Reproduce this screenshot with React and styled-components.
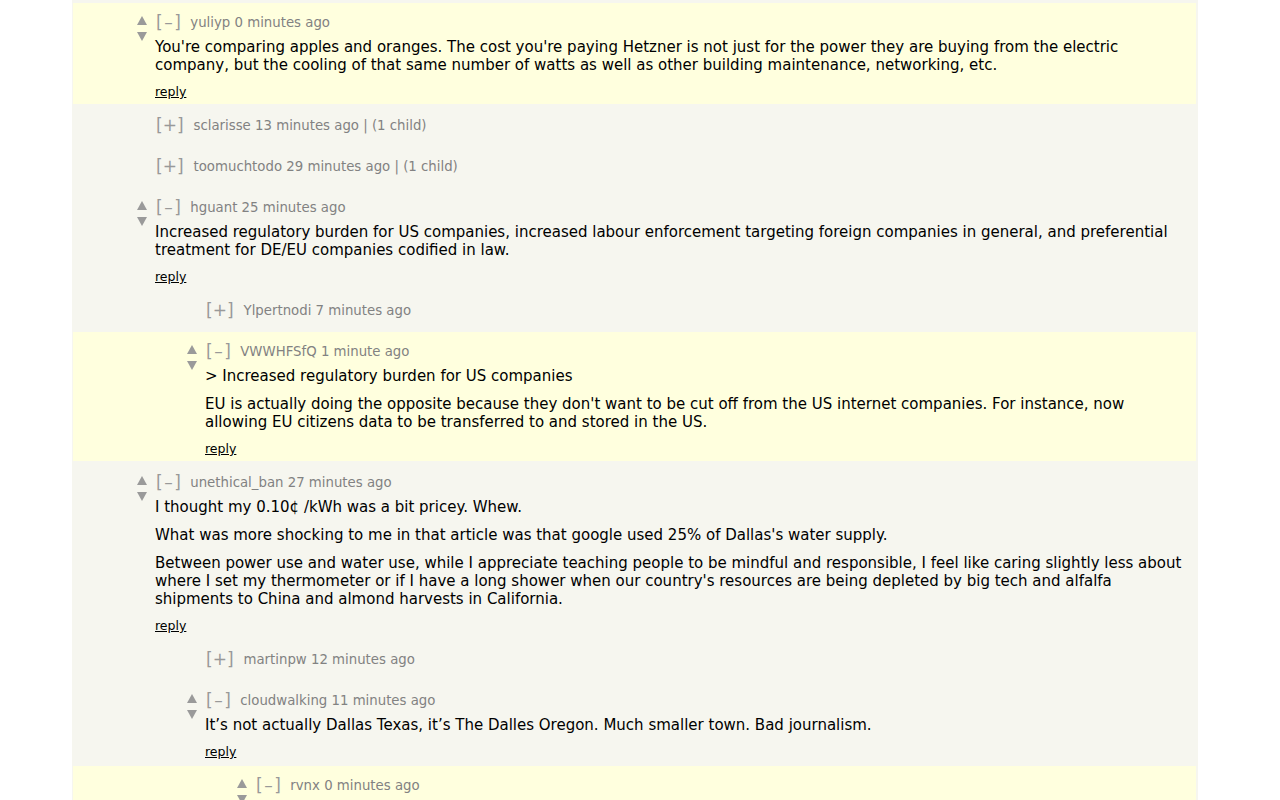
import React from 'react';
import styled, { createGlobalStyle } from 'styled-components';

const GlobalStyle = createGlobalStyle`
  body {
    margin: 0;
    background: #fff;
    font-family: "DejaVu Sans", Verdana, sans-serif;
  }
`;

const Page = styled.div`
  padding-left: 72px;
`;

const Thread = styled.div`
  width: 1126px;
  min-height: 800px;
  background: #f6f6ef;
  padding-top: 3px;
  display: flex;
  flex-direction: column;
  gap: 2px;
`;

const Row = styled.div`
  display: flex;
  margin: 0 2px 0 1px;
  padding: 11px 0 ${props => (props.collapsed ? '12px' : '5px')} ${props => 60 + props.level * 50}px;
  background: ${props => (props.highlight ? '#ffffde' : 'transparent')};
`;

const Votes = styled.div`
  width: 22px;
  flex-shrink: 0;
  display: flex;
  flex-direction: column;
  align-items: flex-start;
  padding: 2px 0 0 4px;
  gap: 7px;
  box-sizing: border-box;
`;

const Body = styled.div`
  flex: 1;
  padding-right: 6px;
`;

const Comhead = styled.div`
  display: flex;
  align-items: center;
  height: 16px;
  font-size: 13.3px;
  color: #828282;
`;

const Toggle = styled.span`
  font-family: "DejaVu Sans", sans-serif;
  font-size: 17px;
  color: #999;
  margin-left: 1px;
  letter-spacing: ${props => (props.collapsed ? '0' : '1.5px')};
  margin-right: ${props => (props.collapsed ? '10px' : '8px')};
`;

const Comment = styled.div`
  margin-top: 8px;
  font-size: 15px;
  line-height: 18px;
  color: #000;

  p {
    margin: 10px 0 0;
  }
  p:first-child {
    margin-top: 0;
  }
`;

const Reply = styled.a`
  display: block;
  margin-top: 11px;
  height: 14px;
  line-height: 14px;
  font-size: 12.5px;
  color: #000;
  text-decoration: underline;
`;

const Arrow = ({ down }) => (
  <svg width="10" height="9" viewBox="0 0 10 9">
    <polygon
      points={down ? '0,0 10,0 5,9' : '5,0 10,9 0,9'}
      fill="#9a9a9a"
    />
  </svg>
);

const comments = [
  {
    user: 'yuliyp', age: '0 minutes ago', level: 0, highlight: true,
    text: [
      "You're comparing apples and oranges. The cost you're paying Hetzner is not just for the power they are buying from the electric company, but the cooling of that same number of watts as well as other building maintenance, networking, etc.",
    ],
  },
  { user: 'sclarisse', age: '13 minutes ago', level: 0, collapsed: true, kids: 1 },
  { user: 'toomuchtodo', age: '29 minutes ago', level: 0, collapsed: true, kids: 1 },
  {
    user: 'hguant', age: '25 minutes ago', level: 0,
    text: [
      'Increased regulatory burden for US companies, increased labour enforcement targeting foreign companies in general, and preferential treatment for DE/EU companies codified in law.',
    ],
  },
  { user: 'Ylpertnodi', age: '7 minutes ago', level: 1, collapsed: true },
  {
    user: 'VWWHFSfQ', age: '1 minute ago', level: 1, highlight: true,
    text: [
      '> Increased regulatory burden for US companies',
      "EU is actually doing the opposite because they don't want to be cut off from the US internet companies. For instance, now allowing EU citizens data to be transferred to and stored in the US.",
    ],
  },
  {
    user: 'unethical_ban', age: '27 minutes ago', level: 0,
    text: [
      'I thought my 0.10¢ /kWh was a bit pricey. Whew.',
      "What was more shocking to me in that article was that google used 25% of Dallas's water supply.",
      "Between power use and water use, while I appreciate teaching people to be mindful and responsible, I feel like caring slightly less about where I set my thermometer or if I have a long shower when our country's resources are being depleted by big tech and alfalfa shipments to China and almond harvests in California.",
    ],
  },
  { user: 'martinpw', age: '12 minutes ago', level: 1, collapsed: true },
  {
    user: 'cloudwalking', age: '11 minutes ago', level: 1,
    text: ['It’s not actually Dallas Texas, it’s The Dalles Oregon. Much smaller town. Bad journalism.'],
  },
  {
    user: 'rvnx', age: '0 minutes ago', level: 2, highlight: true,
    text: ['This is an example.'],
  },
];

const CommentRow = ({ c }) => (
  <Row level={c.level} highlight={c.highlight} collapsed={c.collapsed}>
    <Votes>
      {!c.collapsed && <Arrow />}
      {!c.collapsed && <Arrow down />}
    </Votes>
    <Body>
      <Comhead>
        <Toggle collapsed={c.collapsed}>{c.collapsed ? '[+]' : '[–]'}</Toggle>
        <span>
          {c.user} {c.age}
          {c.kids ? ` | (${c.kids} child)` : ''}
        </span>
      </Comhead>
      {!c.collapsed && (
        <>
          <Comment>
            {c.text.map((t, i) => (
              <p key={i}>{t}</p>
            ))}
          </Comment>
          <Reply>reply</Reply>
        </>
      )}
    </Body>
  </Row>
);

const App = () => (
  <Page>
    <GlobalStyle />
    <Thread>
      {comments.map((c, i) => (
        <CommentRow key={i} c={c} />
      ))}
    </Thread>
  </Page>
);

export default App;
